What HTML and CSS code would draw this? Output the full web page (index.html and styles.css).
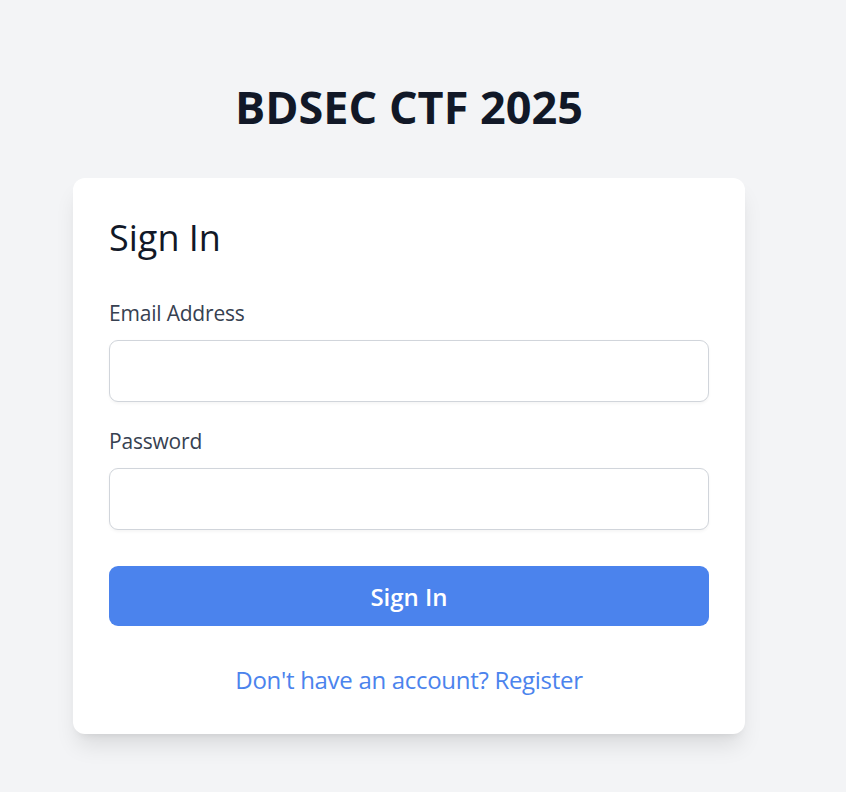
FILE: index.html
```html
<!DOCTYPE html>
<html lang="en">
<head>
<meta charset="utf-8">
<title>BDSEC CTF 2025 - Sign In</title>
<link rel="stylesheet" href="styles.css">
</head>
<body>
<main class="page">
  <h1 class="title">BDSEC CTF 2025</h1>
  <section class="card">
    <h2 class="card-title">Sign In</h2>
    <form class="form">
      <label class="label" for="email">Email Address</label>
      <input class="input" id="email" type="email">
      <label class="label" for="password">Password</label>
      <input class="input" id="password" type="password">
      <button class="btn" type="button">Sign In</button>
    </form>
    <p class="footer"><a class="link" href="#">Don't have an account? Register</a></p>
  </section>
</main>
</body>
</html>
```
FILE: styles.css
```css
* { box-sizing: border-box; }
html, body { margin: 0; padding: 0; }
body {
  background: #f3f4f6;
  font-family: "Open Sans", "Noto Sans", "DejaVu Sans", sans-serif;
  color: #111827;
  min-height: 792px;
}
.page {
  width: 818px;
  padding-top: 80px;
  display: flex;
  flex-direction: column;
  align-items: center;
}
.title {
  margin: 0 0 44px;
  font-size: 45px;
  line-height: 54px;
  font-weight: 700;
  color: #111827;
}
.card {
  width: 672px;
  background: #ffffff;
  border-radius: 12px;
  padding: 36px;
  box-shadow: 0 15px 22px -4px rgba(0,0,0,0.1), 0 6px 9px -6px rgba(0,0,0,0.1);
}
.card-title {
  margin: 0 0 36px;
  font-size: 36px;
  line-height: 48px;
  font-weight: 500;
  color: #111827;
}
.form {
  display: flex;
  flex-direction: column;
}
.label {
  font-size: 21px;
  line-height: 30px;
  font-weight: 500;
  color: #374151;
  margin-bottom: 12px;
  letter-spacing: -0.2px;
}
.input {
  height: 62px;
  width: 100%;
  border: 1px solid #d1d5db;
  border-radius: 9px;
  background: #fff;
  margin: 0 0 24px;
  font: inherit;
  box-shadow: 0 1.5px 3px rgba(0,0,0,0.04);
}
.input:last-of-type { margin-bottom: 36px; }
.btn {
  height: 60px;
  width: 100%;
  border: none;
  border-radius: 9px;
  background: #4b83ed;
  color: #fff;
  font-family: inherit;
  font-size: 24px;
  font-weight: 600;
}
.footer {
  margin: 36px 0 0;
  text-align: center;
  font-size: 24px;
  line-height: 36px;
}
.link {
  color: #4b83ed;
  font-weight: 500;
  letter-spacing: -0.3px;
  text-decoration: none;
}
```
